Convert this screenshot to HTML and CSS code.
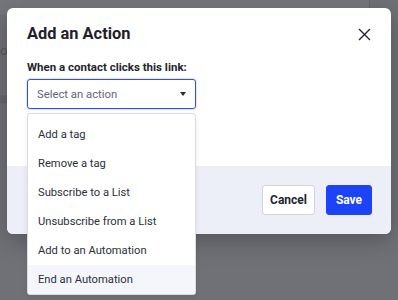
FILE: index.html
```html
<!DOCTYPE html>
<html lang="en">
<head>
    <meta charset="UTF-8">
    <meta name="viewport" content="width=device-width, initial-scale=1.0">
    <title>Add an Action</title>
    <link rel="stylesheet" href="styles.css">
</head>
<body>

<div class="backdrop">
    <div class="page-strip"></div>
    <div class="page-text">or</div>
    <div class="page-band"></div>
</div>

<div class="modal">
    <div class="modal-body">
        <div class="modal-head">
            <h2 class="modal-title">Add an Action</h2>
            <button class="close-btn" aria-label="Close">
                <svg width="13" height="13" viewBox="0 0 13 13">
                    <path d="M1 1 L12 12 M12 1 L1 12" stroke="#22252f" stroke-width="1.4" fill="none"/>
                </svg>
            </button>
        </div>

        <div class="field-label">When a contact clicks this link:</div>
        <div class="select-wrap">
            <div class="select">
                <span class="select-text">Select an action</span>
                <span class="caret"></span>
            </div>
            <ul class="dropdown">
                <li>Add a tag</li>
                <li>Remove a tag</li>
                <li>Subscribe to a List</li>
                <li>Unsubscribe from a List</li>
                <li>Add to an Automation</li>
                <li class="hover">End an Automation</li>
            </ul>
        </div>
    </div>

    <div class="modal-footer">
        <button class="btn btn-cancel">Cancel</button>
        <button class="btn btn-save">Save</button>
    </div>
</div>

</body>
</html>
```

FILE: styles.css
```css
body {
    margin: 0;
    background: #707177;
    font-family: "Roboto", "Noto Sans", sans-serif;
    color: #1f2129;
    height: 300px;
    overflow: hidden;
    position: relative;
}

/* page behind the overlay */
.backdrop {
    position: absolute;
    inset: 0;
}

.page-strip {
    height: 15px;
    background: #76777d;
    border-right: 1px solid #65666d;
    width: 369px;
}

.page-text {
    position: absolute;
    left: 0;
    top: 43px;
    font-size: 13px;
    color: #55565c;
}

.page-band {
    position: absolute;
    left: 0;
    top: 95px;
    width: 10px;
    height: 8px;
    background: #66676d;
}

.modal {
    position: relative;
    margin: 8px 0 0 7px;
    width: 384px;
    background: #fff;
    border-radius: 6px;
    box-shadow: 0 6px 24px rgba(0, 0, 0, 0.25);
}

.modal-body {
    padding: 14px 20px 57px 20px;
}

.modal-head {
    display: flex;
    justify-content: space-between;
    align-items: center;
}

.modal-title {
    margin: 0;
    font-size: 16.4px;
    line-height: 24px;
    font-weight: 700;
}

.close-btn {
    border: none;
    background: none;
    padding: 0;
    width: 13px;
    height: 13px;
    margin-right: 0;
    margin-top: 1px;
}

.close-btn svg {
    display: block;
}

.field-label {
    margin-top: 12px;
    font-size: 11.5px;
    line-height: 18px;
    font-weight: 700;
    color: #23252e;
}

.select-wrap {
    position: relative;
    width: 169px;
    margin-top: 3px;
}

.select {
    height: 30px;
    box-sizing: border-box;
    border: 1px solid #2f4ff0;
    border-radius: 3px;
    display: flex;
    align-items: center;
    justify-content: space-between;
    padding: 0 9px 0 9px;
    box-shadow: 0 0 0 1px rgba(47, 79, 240, 0.15);
}

.select-text {
    font-size: 11.3px;
    color: #5f6578;
}

.caret {
    width: 0;
    height: 0;
    border-left: 3.5px solid transparent;
    border-right: 3.5px solid transparent;
    border-top: 4px solid #2a2d37;
}

.dropdown {
    position: absolute;
    left: 0;
    right: 0;
    top: 34px;
    margin: 0;
    padding: 6px 0 0 0;
    list-style: none;
    background: #fff;
    border: 1px solid #d9dce5;
    border-radius: 3px;
    box-shadow: 0 2px 6px rgba(0, 0, 0, 0.08);
    z-index: 2;
    overflow: hidden;
}

.dropdown li {
    height: 29px;
    line-height: 30px;
    padding-left: 10px;
    font-size: 11.2px;
    color: #2b2f3b;
}

.dropdown li.hover {
    background: #f4f6fb;
}

.modal-footer {
    background: #eceff7;
    border-radius: 0 0 6px 6px;
    height: 68px;
    box-sizing: border-box;
    padding: 19px 19px;
    display: flex;
    justify-content: flex-end;
    gap: 11px;
}

.btn {
    height: 30px;
    border-radius: 3px;
    font-family: inherit;
    font-size: 12px;
    font-weight: 700;
    padding: 0;
}

.btn-cancel {
    width: 53px;
    background: #fff;
    border: 1px solid #d0d4de;
    color: #23252e;
}

.btn-save {
    width: 46px;
    background: #1c44f6;
    border: 1px solid #1c44f6;
    color: #fff;
}
```
